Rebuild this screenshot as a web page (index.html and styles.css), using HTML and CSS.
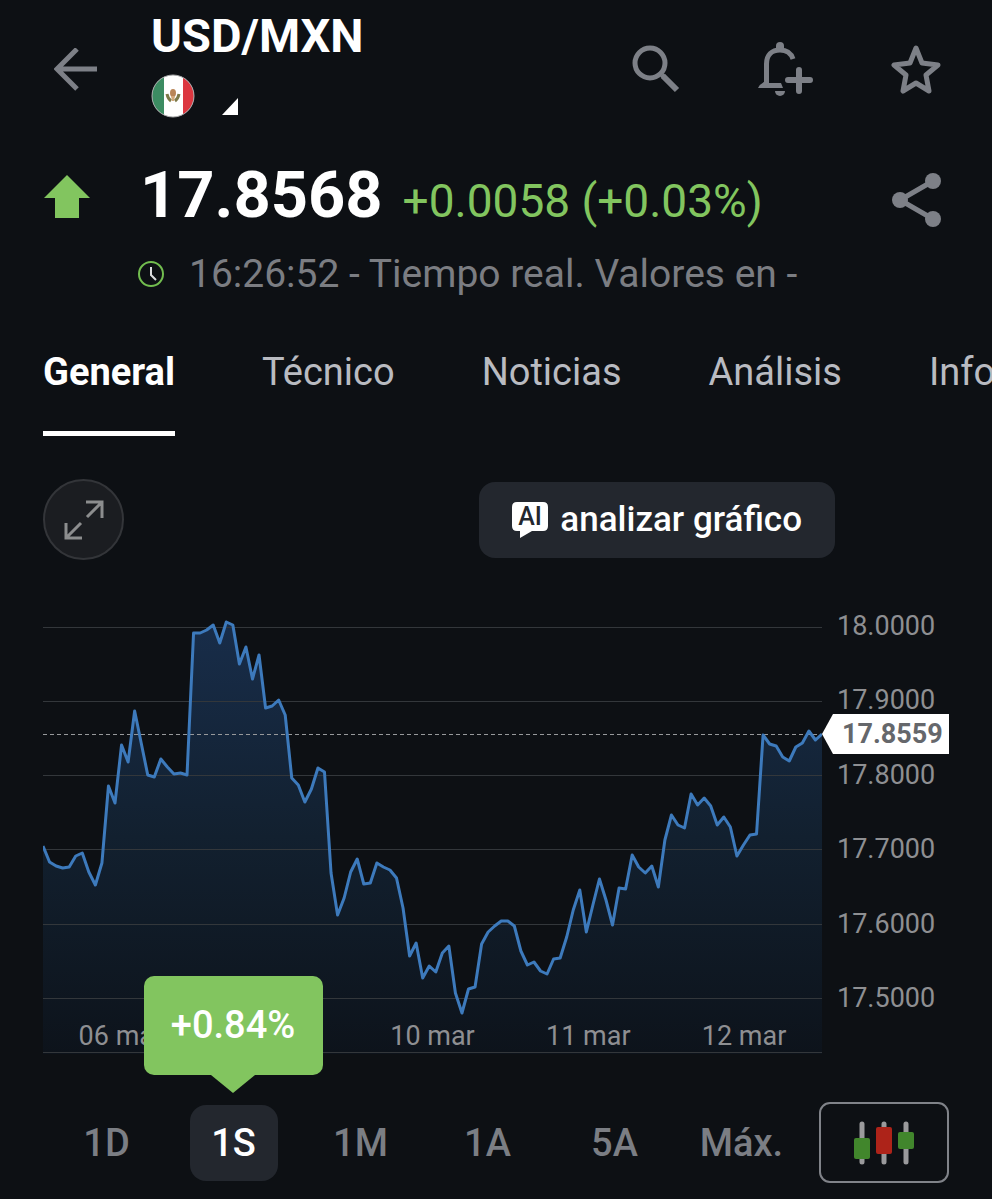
FILE: index.html
```
<!DOCTYPE html>
<html lang="es">
<head>
    <meta charset="UTF-8">
    <meta name="viewport" content="width=device-width, initial-scale=1.0">
    <title>USD/MXN</title>
    <link rel="stylesheet" href="styles.css">
</head>
<body>
    <header class="header">
        <button class="icon-btn back" aria-label="Volver">
            <svg width="44" height="44" viewBox="0 0 44 44" fill="none" stroke="currentColor" stroke-width="5">
                <path d="M43 21H4M23 1L3 21l20 20"/>
            </svg>
        </button>
        <div class="title">
            <h1>USD/MXN</h1>
            <div class="title-sub">
                <svg width="44" height="44" viewBox="0 0 44 44">
                    <clipPath id="flag"><circle cx="22" cy="22" r="21"/></clipPath>
                    <g clip-path="url(#flag)">
                        <rect width="44" height="44" fill="#fff"/>
                        <rect width="13" height="44" fill="#3c8c62"/>
                        <rect x="32" width="12" height="44" fill="#dc3740"/>
                    </g>
                    <circle cx="22" cy="22" r="21" fill="none" stroke="#a9aaab" stroke-width="1"/>
                    <ellipse cx="22" cy="19" rx="3" ry="4" fill="#b98557"/>
                    <path d="M20 22h4l-1 5h-2z" fill="#d3a777"/>
                    <path d="M16 20q1 5 4 7M28 20q-1 5-4 7" fill="none" stroke="#7d7948" stroke-width="3"/>
                </svg>
                <svg class="corner" width="16" height="17" viewBox="0 0 16 17"><path d="M16 0v17H0z" fill="#fff"/></svg>
            </div>
        </div>
        <div class="actions">
            <button class="icon-btn" aria-label="Buscar">
                <svg width="50" height="50" viewBox="0 0 50 50" fill="none" stroke="currentColor" stroke-width="5">
                    <circle cx="19" cy="18" r="15"/>
                    <path d="M31 30l2 2" stroke-width="5"/>
                    <path d="M32 31l14 14" stroke-width="6"/>
                </svg>
            </button>
            <button class="icon-btn" aria-label="Crear alerta">
                <svg width="56" height="56" viewBox="0 0 56 56" fill="none" stroke="currentColor" stroke-width="5">
                    <path d="M22 0a4 4 0 0 1 4 4v4h-8V4a4 4 0 0 1 4-4z" fill="currentColor" stroke="none"/>
                    <path d="M8.500 42V22C8.500 13 14 8 22 8c6 0 11 3 13 9"/>
                    <path d="M6 38h5v3h12l2 5H0q2-4 6-6z" fill="currentColor" stroke="none"/>
                    <path d="M17 49h10a5 5 0 0 1-10 0z" fill="currentColor" stroke="none"/>
                    <path d="M41 28v21M30 38h22" stroke-width="6" stroke-linecap="round"/>
                </svg>
            </button>
            <button class="icon-btn" aria-label="Favorito">
                <svg width="50" height="50" viewBox="0 0 50 50" fill="none" stroke="currentColor" stroke-width="5" stroke-linejoin="round">
                    <path d="M25 3l6 15 16 2-12 10 3 16-13-8-13 8 3-16L3 20l16-2z"/>
                </svg>
            </button>
        </div>
    </header>

    <section class="quote">
        <svg class="arrow-up" width="46" height="44" viewBox="0 0 46 44"><path d="M23 0l23 23H35v20H11V23H0z" fill="#82c55f"/></svg>
        <div class="values">
            <span class="price">17.8568</span>
            <span class="change">+0.0058 (+0.03%)</span>
        </div>
        <button class="icon-btn share" aria-label="Compartir">
            <svg width="50" height="54" viewBox="0 0 50 54" fill="currentColor">
                <path d="M42 8L9 27l33 19" fill="none" stroke="currentColor" stroke-width="5"/>
                <circle cx="42" cy="8" r="8"/>
                <circle cx="9" cy="27" r="8"/>
                <circle cx="42" cy="46" r="8"/>
            </svg>
        </button>
    </section>
    <p class="status">
        <svg width="28" height="28" viewBox="0 0 28 28" fill="none">
            <circle cx="14" cy="14" r="12" stroke="#72bd4f" stroke-width="2"/>
            <path d="M14 7v8l5 5" stroke="#dcdde0" stroke-width="2"/>
        </svg>
        16:26:52 - Tiempo real. Valores en -
    </p>

    <nav class="tabs">
        <a href="#" class="active">General</a>
        <a href="#">Técnico</a>
        <a href="#">Noticias</a>
        <a href="#">Análisis</a>
        <a href="#">Info</a>
    </nav>

    <div class="toolbar">
        <button class="expand" aria-label="Pantalla completa">
            <svg width="40" height="40" viewBox="0 0 40 40" fill="none" stroke="currentColor" stroke-width="3">
                <path d="M22 2h16v16M38 2L23 17M2 23v15h16M2 38l15-15"/>
            </svg>
        </button>
        <button class="analyze">
            <svg width="36" height="36" viewBox="0 0 36 36">
                <path d="M5 0h26q5 0 5 5v19q0 5-5 5H20L8 36v-7H5q-5 0-5-5V5q0-5 5-5z" fill="#fff"/>
                <text class="ai" x="18" y="23" text-anchor="middle">AI</text>
            </svg>
            analizar gráfico
        </button>
    </div>

    <main class="chart">
        <div class="plot">
            <svg class="series" viewBox="0 0 119 454" preserveAspectRatio="none">
                <defs>
                    <linearGradient id="area" gradientUnits="userSpaceOnUse" x1="0" y1="20" x2="0" y2="454">
                        <stop offset="0" stop-color="#182d4a"/>
                        <stop offset="0.5" stop-color="#12202f"/>
                        <stop offset="1" stop-color="#0d131b"/>
                    </linearGradient>
                </defs>
                <polygon id="fill" fill="url(#area)"/>
                <path class="grid" d="M0 27.5H119M0 101.5H119M0 175.5H119M0 249.5H119M0 324.5H119M0 398.5H119M0 452.5H119"/>
                <path class="last" d="M0 134.500H119"/>
                <polyline id="line"/>
            </svg>
            <div class="dates">
                <span>06 mar</span>
                <span></span>
                <span>10 mar</span>
                <span>11 mar</span>
                <span>12 mar</span>
            </div>
        </div>
        <div class="axis">
            <span>18.0000</span>
            <span>17.9000</span>
            <span>17.8000</span>
            <span>17.7000</span>
            <span>17.6000</span>
            <span>17.5000</span>
            <strong class="tag">17.8559</strong>
        </div>
    </main>

    <footer class="bottom">
        <div class="ranges">
            <button>1D</button>
            <button class="active">1S<span class="tooltip">+0.84%</span></button>
            <button>1M</button>
            <button>1A</button>
            <button>5A</button>
            <button>Máx.</button>
        </div>
        <button class="candles" aria-label="Velas">
            <svg width="60" height="44" viewBox="0 0 60 44">
                <path d="M8 3v38M30 3v38M52 3v38" stroke="#9a9a9c" stroke-width="5" stroke-linecap="round"/>
                <rect x="0" y="17" width="16" height="21" rx="2" fill="#41862c"/>
                <rect x="22" y="6" width="16" height="27" rx="2" fill="#ad2319"/>
                <rect x="44" y="11" width="16" height="17" rx="2" fill="#41862c"/>
            </svg>
        </button>
    </footer>

    <script>
        // una muestra por paso, distancia desde arriba del gráfico
        const data = [
            246, 262, 266, 268, 267, 256, 253, 272, 285, 263, 186, 203, 145, 162, 111, 143, 175, 177, 159, 167,
            174, 173, 175, 33, 33, 30, 25, 43, 22, 25, 64, 47, 79, 55, 108, 106, 100, 115, 178, 185,
            202, 189, 168, 172, 273, 315, 298, 272, 259, 284, 283, 263, 267, 270, 278, 308, 356, 343, 378, 366,
            372, 353, 346, 393, 413, 389, 387, 344, 332, 326, 321, 321, 326, 351, 365, 362, 371, 374, 359, 358,
            337, 310, 290, 332, 305, 279, 300, 325, 288, 289, 255, 267, 273, 266, 287, 240, 215, 225, 228, 194,
            205, 198, 206, 225, 217, 227, 256, 245, 235, 234, 135, 144, 146, 157, 161, 147, 143, 131, 140, 134
        ];
        const points = data.map((y, i) => i + ',' + y).join(' ');
        document.getElementById('line').setAttribute('points', points);
        document.getElementById('fill').setAttribute('points', '0,454 ' + points + ' 119,454');
    </script>
</body>
</html>
```
FILE: styles.css
```
* {
    box-sizing: border-box;
}
body {
    margin: 0;
    background-color: #0d1014;
    color: #fff;
    font-family: Roboto, 'Noto Sans', sans-serif;
    overflow-x: hidden;
}
button {
    background: none;
    border: none;
    padding: 0;
    color: inherit;
    font-family: inherit;
    cursor: pointer;
}
svg {
    display: block;
    flex: none;
}
.icon-btn {
    display: flex;
    align-items: center;
    justify-content: center;
    width: 50px;
    color: #7d8087;
}
.header {
    display: flex;
    align-items: center;
    padding: 8px 51px 0;
}
.title {
    flex: 1;
    height: 124px;
    margin-left: 50px;
}
h1 {
    margin: 0 0 10px;
    font-size: 47px;
    line-height: 56px;
    font-weight: bold;
}
.title-sub {
    display: flex;
    align-items: flex-end;
    gap: 27px;
}
.corner {
    margin-bottom: 3px;
}
.actions {
    display: flex;
    align-items: center;
    gap: 80px;
}
.quote {
    display: flex;
    align-items: center;
    height: 94px;
    margin-top: 21px;
    padding: 0 51px 0 44px;
}
.arrow-up {
    align-self: flex-start;
    margin-top: 22px;
}
.values {
    display: flex;
    align-items: baseline;
    align-self: flex-start;
    flex: 1;
    gap: 20px;
    margin-left: 50px;
    line-height: 84px;
    white-space: nowrap;
}
.price {
    font-size: 65px;
    font-weight: bold;
}
.change {
    font-size: 46px;
    color: #82c55f;
}
.status {
    display: flex;
    align-items: center;
    gap: 24px;
    margin: 4px 0 0;
    padding-left: 137px;
    font-size: 39px;
    line-height: 46px;
    color: #7b7d82;
    white-space: nowrap;
}
.tabs {
    display: flex;
    gap: 87px;
    margin-top: 53px;
    padding-left: 43px;
    overflow: hidden;
}
.tabs a {
    padding-bottom: 37px;
    border-bottom: 5px solid transparent;
    font-size: 38px;
    line-height: 44px;
    color: #b9bbc1;
    text-decoration: none;
}
.tabs .active {
    border-color: #fff;
    color: #fff;
    font-weight: bold;
}
.toolbar {
    display: flex;
    align-items: center;
    justify-content: space-between;
    margin-top: 43px;
    padding: 0 157px 0 43px;
}
.expand {
    display: flex;
    align-items: center;
    justify-content: center;
    width: 81px;
    height: 81px;
    border: 2px solid #333539;
    border-radius: 50%;
    background-color: #1b1d21;
    color: #8c8d8e;
}
.analyze {
    display: flex;
    align-items: center;
    gap: 12px;
    height: 76px;
    padding: 0 33px;
    border-radius: 16px;
    background-color: #23272e;
    font-size: 35px;
    font-weight: 500;
}
.ai {
    font-size: 25px;
    font-weight: 500;
    fill: #23272e;
}
.chart {
    display: flex;
    margin: 40px 43px 0;
}
.plot {
    display: grid;
    flex: 1;
}
.series,
.dates {
    grid-area: 1 / 1;
}
.series {
    width: 100%;
    height: 454px;
}
.series path,
.series polyline {
    vector-effect: non-scaling-stroke;
}
#line {
    fill: none;
    stroke: #3d7abc;
    stroke-width: 3;
    stroke-linejoin: round;
}
.grid {
    stroke: #33373b;
    stroke-width: 1;
}
.last {
    stroke: #97999b;
    stroke-width: 1;
    stroke-dasharray: 4 3;
}
.dates {
    display: grid;
    grid-template-columns: repeat(5, 1fr);
    align-self: end;
    padding-bottom: 2px;
    font-size: 27px;
    line-height: 32px;
    text-align: center;
    color: #8e8f92;
}
.axis {
    position: relative;
    display: flex;
    flex-direction: column;
    justify-content: space-between;
    width: 127px;
    height: 404px;
    margin-top: 10px;
    padding-left: 15px;
    font-size: 27px;
    line-height: 32px;
    color: #8e8f92;
}
.tag {
    position: absolute;
    top: 104px;
    left: 0;
    width: 127px;
    padding-left: 20px;
    background-color: #fff;
    clip-path: polygon(11px 0, 100% 0, 100% 100%, 11px 100%, 0 50%);
    color: #65676b;
    line-height: 40px;
}
.bottom {
    display: flex;
    align-items: center;
    gap: 14px;
    margin: 48px 43px 16px;
}
.ranges {
    display: grid;
    grid-template-columns: repeat(6, 1fr);
    justify-items: center;
    flex: 1;
}
.ranges button {
    position: relative;
    min-width: 88px;
    height: 76px;
    border-radius: 16px;
    font-size: 38px;
    font-weight: 500;
    color: #7b7e84;
}
.ranges .active {
    background-color: #23272e;
    color: #fff;
}
.tooltip {
    position: absolute;
    bottom: 106px;
    left: 50%;
    width: 179px;
    margin-left: -90px;
    border-radius: 10px;
    background-color: #82c55f;
    line-height: 99px;
}
.tooltip::after {
    content: '';
    position: absolute;
    top: 100%;
    left: 50%;
    margin-left: -22px;
    border: 22px solid transparent;
    border-top: 18px solid #82c55f;
    border-bottom: 0;
}
.candles {
    display: flex;
    align-items: center;
    justify-content: center;
    width: 130px;
    height: 81px;
    border: 2px solid #808389;
    border-radius: 11px;
}
```
